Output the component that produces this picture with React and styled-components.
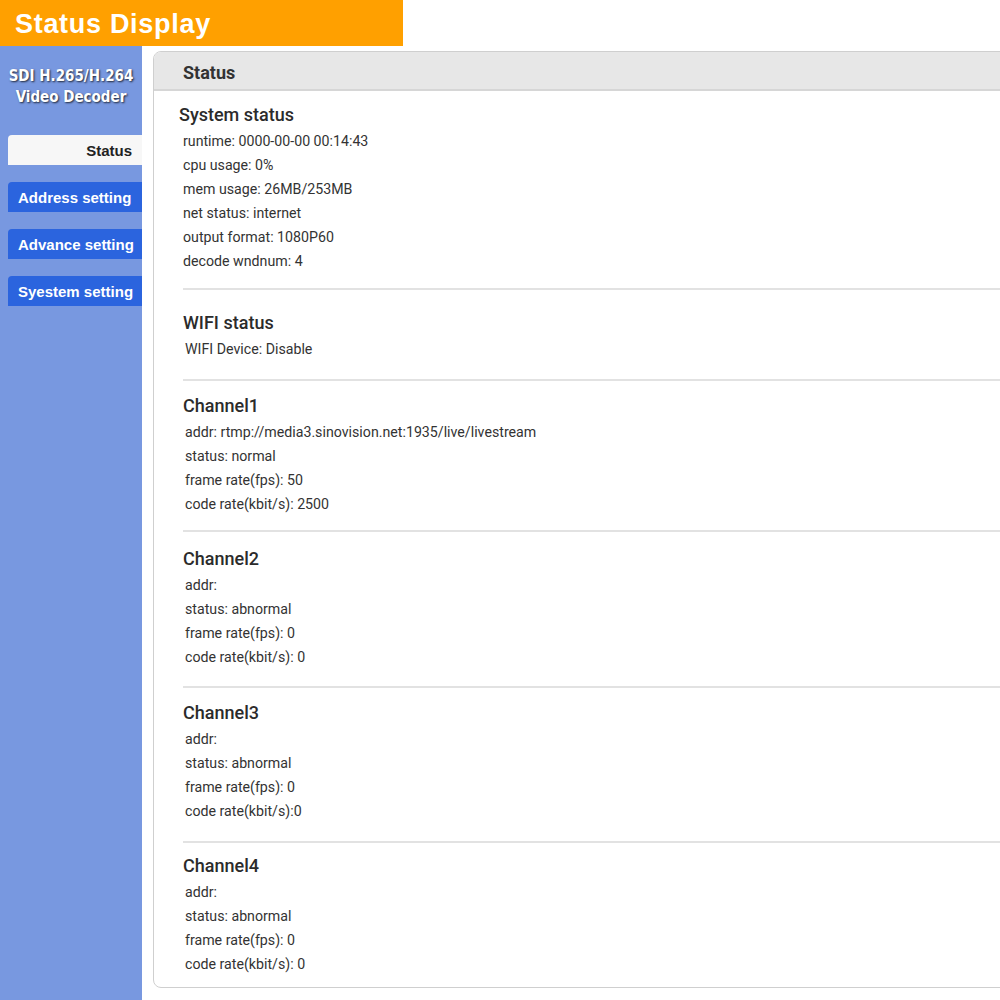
import React from "react";
import styled, { createGlobalStyle } from "styled-components";

const GlobalStyle = createGlobalStyle`
  html, body {
    margin: 0;
    padding: 0;
    background: #fff;
    overflow: hidden;
  }
  body {
    font-family: Roboto, "Liberation Sans", Arial, sans-serif;
    color: #333;
  }
`;

const Page = styled.div`
  width: 1000px;
  height: 1000px;
  display: flex;
  flex-direction: column;
`;

const TopBar = styled.div`
  width: 403px;
  height: 46px;
  background: #ffa000;
  color: #fff;
  font-family: "Liberation Sans", Arial, sans-serif;
  font-weight: bold;
  font-size: 27px;
  letter-spacing: 0.7px;
  line-height: 49px;
  padding-left: 15px;
  box-sizing: border-box;
  flex-shrink: 0;
`;

const Body = styled.div`
  flex: 1;
  display: flex;
  min-height: 0;
`;

const Sidebar = styled.div`
  width: 142px;
  flex-shrink: 0;
  background: #7898e0;
  display: flex;
  flex-direction: column;
  padding-top: 20px;
  box-sizing: border-box;
`;

// narrow face for the product name
const Brand = styled.div`
  color: #fff;
  font-family: "DejaVu Sans", sans-serif;
  font-stretch: condensed;
  font-weight: bold;
  font-size: 15px;
  line-height: 21px;
  text-align: center;
  white-space: nowrap;
  text-shadow: 1px 1px 2px rgba(0, 0, 0, 0.75);
  margin-bottom: 27px;
`;

const Nav = styled.div`
  display: flex;
  flex-direction: column;
  gap: 17px;
  padding-left: 8px;
`;

const NavItem = styled.div`
  height: 30px;
  line-height: 32px;
  border-radius: 4px 0 0 0;
  font-family: "Liberation Sans", Arial, sans-serif;
  font-weight: bold;
  font-size: 15px;
  background: ${(p) => (p.active ? "#f7f7f7" : "#2b64de")};
  color: ${(p) => (p.active ? "#222" : "#fff")};
  text-align: ${(p) => (p.active ? "right" : "left")};
  padding: ${(p) => (p.active ? "0 10px 0 0" : "0 0 0 10px")};
  white-space: nowrap;
`;

const Main = styled.div`
  flex: 1;
  padding: 5px 0 12px 11px;
  min-width: 0;
`;

const Panel = styled.div`
  width: 900px;
  height: 100%;
  border: 1px solid #cfcfcf;
  border-radius: 8px;
  box-sizing: border-box;
  overflow: hidden;
`;

const PanelHead = styled.div`
  height: 39px;
  background: #e7e7e7;
  border-bottom: 2px solid #d6d6d6;
  box-sizing: border-box;
  padding-left: 29px;
  font-size: 18px;
  font-weight: bold;
  line-height: 42px;
  color: #333;
`;

const PanelBody = styled.div`
  padding-left: 29px;
`;

const Section = styled.div`
  padding: ${(p) => p.top || 12}px 0 ${(p) => p.bottom || 18}px 0;
  border-bottom: 2px solid #e2e2e2;
  &:last-child {
    border-bottom: none;
    padding-bottom: 10px;
  }
`;

const Heading = styled.div`
  font-size: 18px;
  font-weight: 500;
  line-height: 28px;
  margin-left: ${(p) => p.shift || 0}px;
  color: #2b2b2b;
`;

const Row = styled.div`
  font-size: 14.2px;
  line-height: 24px;
  padding-left: ${(p) => (p.indent === undefined ? 2 : p.indent)}px;
  color: #333;
`;

const sections = [
  {
    title: "System status",
    shift: -4,
    top: 10,
    bottom: 15,
    indent: 0,
    rows: [
      "runtime: 0000-00-00 00:14:43",
      "cpu usage: 0%",
      "mem usage: 26MB/253MB",
      "net status: internet",
      "output format: 1080P60",
      "decode wndnum: 4",
    ],
  },
  {
    title: "WIFI status",
    top: 19,
    bottom: 18,
    rows: ["WIFI Device: Disable"],
  },
  {
    title: "Channel1",
    top: 11,
    bottom: 14,
    rows: [
      "addr: rtmp://media3.sinovision.net:1935/live/livestream",
      "status: normal",
      "frame rate(fps): 50",
      "code rate(kbit/s): 2500",
    ],
  },
  {
    title: "Channel2",
    top: 13,
    bottom: 17,
    rows: ["addr:", "status: abnormal", "frame rate(fps): 0", "code rate(kbit/s): 0"],
  },
  {
    title: "Channel3",
    top: 11,
    bottom: 18,
    rows: ["addr:", "status: abnormal", "frame rate(fps): 0", "code rate(kbit/s):0"],
  },
  {
    title: "Channel4",
    top: 9,
    rows: ["addr:", "status: abnormal", "frame rate(fps): 0", "code rate(kbit/s): 0"],
  },
];

const App = () => {
  return (
    <Page>
      <GlobalStyle />
      <TopBar>Status Display</TopBar>
      <Body>
        <Sidebar>
          <Brand>
            SDI H.265/H.264
            <br />
            Video Decoder
          </Brand>
          <Nav>
            <NavItem active>Status</NavItem>
            <NavItem>Address setting</NavItem>
            <NavItem>Advance setting</NavItem>
            <NavItem>Syestem setting</NavItem>
          </Nav>
        </Sidebar>
        <Main>
          <Panel>
            <PanelHead>Status</PanelHead>
            <PanelBody>
              {sections.map((s) => (
                <Section key={s.title} top={s.top} bottom={s.bottom}>
                  <Heading shift={s.shift}>{s.title}</Heading>
                  {s.rows.map((r, i) => (
                    <Row key={i} indent={s.indent}>
                      {r}
                    </Row>
                  ))}
                </Section>
              ))}
            </PanelBody>
          </Panel>
        </Main>
      </Body>
    </Page>
  );
};

export default App;
